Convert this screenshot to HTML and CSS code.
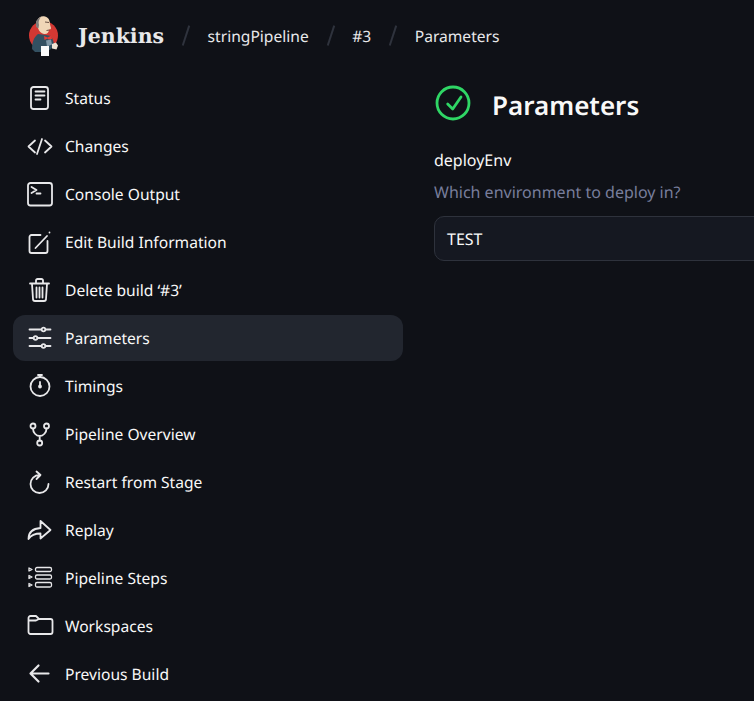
FILE: index.html
```html
<!DOCTYPE html>
<html lang="en">
<head>
    <meta charset="UTF-8">
    <meta name="viewport" content="width=device-width, initial-scale=1.0">
    <title>Parameters - stringPipeline #3</title>
    <link rel="stylesheet" href="styles.css">
</head>
<body>
    <header class="header">
        <a class="logo">
            <svg class="logo-head" viewBox="0 0 30 40" width="30" height="40">
                <circle cx="14.500" cy="19.500" r="14.500" fill="#d33833"/>
                <path d="M3 33c0-7 2-12 6-15l8 1 5 1c2 3 3 7 3 10l-3 3-5 3H6z" fill="#335061"/>
                <path d="M8 5c1-4 5-5.500 8-4.500 4 1 5 4.500 5 8l1 3.500c0 1-1 1.500-2 1.500 0 3-2 5-5 4.500-3-.5-5-3-6-6-2-1-2.500-5-1-8z" fill="#f0d6b7"/>
                <path d="M8 12c-2-4-1-9 4-11-2 2-3 5-2 8l-.5 3z" fill="#7d7a7a"/>
                <path d="M16 6l4 .5M17.500 14.500l3-.5" stroke="#49322a" stroke-width=".8" fill="none"/>
                <path d="M15 20l3.500 1.500 4-2 .5 3.500-3.500.5-1-1-3 1.500z" fill="#e23b36"/>
                <path d="M17 24.500l5-1 1 5-5 2z" fill="#7f97a6"/>
                <rect x="12" y="30" width="8" height="10" fill="#fafafa"/>
                <path d="M23 28l4-1.500 2 3-1.500 4-4.500-1z" fill="#efe3d3"/>
            </svg>
            <span class="logo-text">Jenkins</span>
        </a>
        <span class="crumb-sep"></span>
        <a class="crumb">stringPipeline</a>
        <span class="crumb-sep"></span>
        <a class="crumb">#3</a>
        <span class="crumb-sep"></span>
        <a class="crumb">Parameters</a>
    </header>

    <div class="page">
        <nav class="sidebar">
            <a class="task">
                <svg class="icon" viewBox="0 0 24 24"><rect x="3.500" y="1" width="17" height="22" rx="2.500"/><path d="M8 5.500h9M8 9.500h9M8 13.500h5"/></svg>
                Status
            </a>
            <a class="task">
                <svg class="icon" viewBox="0 0 24 24"><path d="M7.500 6.500L1 12.500l6.500 6M17.500 6.500l6.500 6-6.500 6M14.500 5l-5 15"/></svg>
                Changes
            </a>
            <a class="task">
                <svg class="icon" viewBox="0 0 24 24"><rect x="0.500" y="1" width="24" height="22.500" rx="2.500"/><path d="M4 5l5 3-5 3M9 11.500h4"/></svg>
                Console Output
            </a>
            <a class="task">
                <svg class="icon" viewBox="0 0 24 24"><path d="M13 5H4a2 2 0 0 0-2 2v14a2 2 0 0 0 2 2h14a2 2 0 0 0 2-2V11M8 18L19.500 6M22 2.500v0"/></svg>
                Edit Build Information
            </a>
            <a class="task">
                <svg class="icon" viewBox="0 0 24 24"><path d="M2.500 5.500h19M8.500 5V2.500a1.500 1.500 0 0 1 1.500-1.500h4a1.500 1.500 0 0 1 1.500 1.500V5M4.500 6l1 15a2 2 0 0 0 2 2h9a2 2 0 0 0 2-2l1-15M9 9.500v10M12 9.500v10M15 9.500v10"/></svg>
                Delete build ‘#3’
            </a>
            <a class="task active">
                <svg class="icon" viewBox="0 0 24 24"><path d="M2 3.500h21M2 12h21M2 20h21"/><circle cx="16" cy="3.500" r="1.800" class="knob"/><circle cx="8" cy="12" r="1.800" class="knob"/><circle cx="16" cy="20" r="1.800" class="knob"/></svg>
                Parameters
            </a>
            <a class="task">
                <svg class="icon" viewBox="0 0 24 24"><circle cx="12.500" cy="12.500" r="9.500"/><path d="M12.500 3V1M12.500 12.500V8M10.500 1h4"/><circle cx="12.500" cy="12.500" r="1"/></svg>
                Timings
            </a>
            <a class="task">
                <svg class="icon" viewBox="0 0 24 24"><circle cx="5.500" cy="4" r="2.500"/><circle cx="19" cy="4" r="2.500"/><circle cx="12.200" cy="21" r="2.500"/><path d="M12.200 18.500V14M5.500 6.500c0 4 3 7.500 6.700 7.500s6.800-3.500 6.800-7.500"/></svg>
                Pipeline Overview
            </a>
            <a class="task">
                <svg class="icon" viewBox="0 0 24 24"><path d="M12 5a9 9 0 1 0 9 9M9 1.500L13 5l-4 4"/></svg>
                Restart from Stage
            </a>
            <a class="task">
                <svg class="icon" viewBox="0 0 24 24"><path d="M13 3l10 9-10 8.500v-5c-5 0-9 1-12 5.500 0-7 5-10.500 12-11z"/></svg>
                Replay
            </a>
            <a class="task">
                <svg class="icon stroke-thin" viewBox="0 0 24 24"><rect x="8" y="1.500" width="16" height="4" rx="1.500"/><rect x="8" y="9" width="16" height="4" rx="1.500"/><rect x="8" y="16.500" width="16" height="4.500" rx="1.500"/><path d="M1.500 2l3 1.500-3 1.500zM1.500 9.500l3 1.500-3 1.500zM1.500 17.500l3 1.500-3 1.500z"/></svg>
                Pipeline Steps
            </a>
            <a class="task">
                <svg class="icon" viewBox="0 0 24 24"><path d="M1 6.500V4a2 2 0 0 1 2-2h5.500l3 3H23a2 2 0 0 1 2 2v11a2 2 0 0 1-2 2H3a2 2 0 0 1-2-2zM1 6.500h7.500l3-1.500"/></svg>
                Workspaces
            </a>
            <a class="task">
                <svg class="icon icon-bold" viewBox="0 0 24 24"><path d="M21 11.500H4M11 3.500l-8 8 8 8"/></svg>
                Previous Build
            </a>
        </nav>

        <main class="main">
            <div class="title-row">
                <svg class="status-icon" viewBox="0 0 36 36" width="36" height="36"><circle cx="18" cy="18" r="16"/><path d="M12.700 19l5 5 8.300-12"/></svg>
                <h1>Parameters</h1>
            </div>
            <div class="param-name">deployEnv</div>
            <div class="param-desc">Which environment to deploy in?</div>
            <div class="param-value">TEST</div>
        </main>
    </div>
</body>
</html>
```

FILE: styles.css
```css
html, body {
    height: 701px;
    overflow: hidden;
}
body {
    margin: 0;
    background-color: #0f1117;
    color: #f8f8f8;
    font-family: "Noto Sans", sans-serif;
    font-size: 15.6px;
    text-rendering: geometricPrecision;
}
.header {
    display: flex;
    align-items: center;
    height: 71px;
    margin-bottom: 4px;
    padding-left: 29px;
}
.logo {
    display: flex;
    align-items: center;
    gap: 19px;
}
.logo-text {
    font-family: "DejaVu Serif", serif;
    font-weight: bold;
    font-size: 20.500px;
    color: #e8e8ea;
}
.crumb {
    color: #e8e8ea;
}
.crumb-sep {
    width: 1.5px;
    height: 21px;
    margin: 0 21px;
    background: #2f333d;
    transform: rotate(18deg);
}
.page {
    display: flex;
}
.sidebar {
    display: flex;
    flex-direction: column;
    gap: 2px;
    width: 390px;
    margin-left: 13px;
    flex-shrink: 0;
}
.task {
    display: flex;
    align-items: center;
    gap: 14px;
    height: 46px;
    padding-left: 14px;
    border-radius: 12px;
}
.task.active {
    background-color: #22262f;
}
.icon {
    width: 25px;
    height: 24px;
    margin-right: -1px;
    overflow: visible;
    fill: none;
    stroke: #e8e8ea;
    stroke-width: 1.8;
    stroke-linecap: round;
    stroke-linejoin: round;
    flex-shrink: 0;
}
.icon .knob {
    fill: #22262f;
}
.stroke-thin {
    stroke-width: 1.3;
}
.icon-bold {
    stroke-width: 2.2;
}
.main {
    margin-left: 31px;
    padding-top: 7px;
    width: 560px;
    flex-shrink: 0;
}
.title-row {
    display: flex;
    align-items: center;
    gap: 21px;
    height: 46px;
    margin-bottom: 20px;
}
.status-icon {
    margin-left: 1px;
    margin-bottom: 4px;
    fill: none;
    stroke: #2fd665;
    stroke-width: 2.800;
    stroke-linecap: round;
    stroke-linejoin: round;
}
h1 {
    margin: 0;
    font-size: 26px;
    font-weight: 600;
}
.param-name {
    font-size: 16px;
    line-height: 24px;
    margin-bottom: 8px;
}
.param-desc {
    font-size: 16px;
    line-height: 24px;
    color: #787e9c;
    margin-bottom: 12px;
}
.param-value {
    font-size: 16px;
    height: 43px;
    line-height: 45px;
    padding-left: 12px;
    background-color: #151821;
    border: 1px solid #2e323c;
    border-radius: 10px;
}
```
